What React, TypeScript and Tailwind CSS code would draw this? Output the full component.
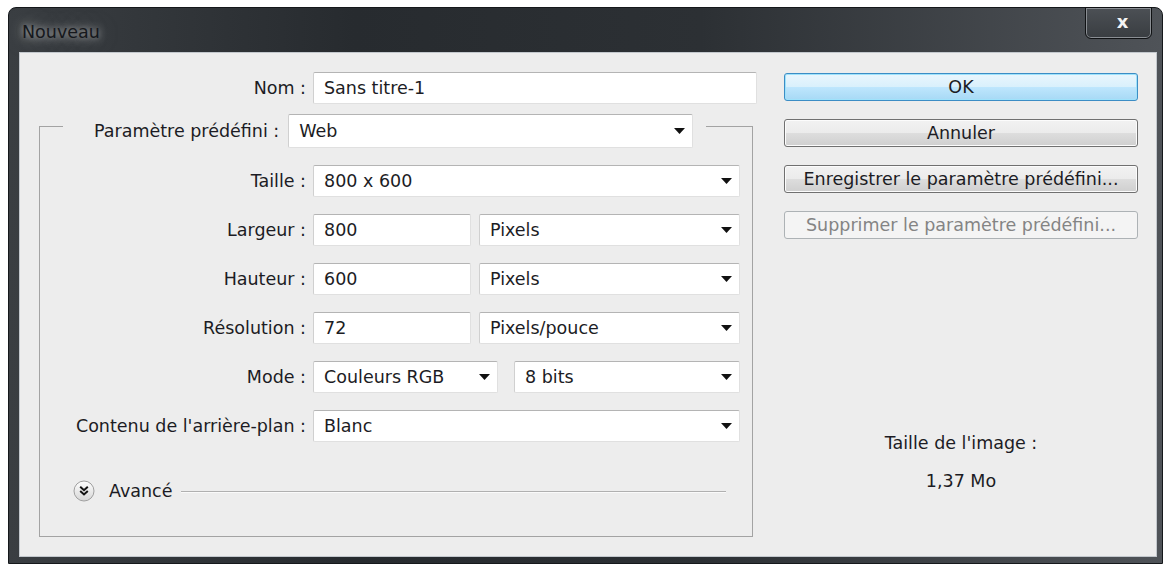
import React from "react";

const Arrow = () => (
  <svg width="11" height="6" viewBox="0 0 11 6" className="shrink-0">
    <path d="M0 0h11L5.5 6z" fill="#111" />
  </svg>
);

const boxCls =
  "h-[32px] bg-white rounded-[2px] border border-[#e0e0e0] border-t-[#b4b4b4] border-l-[#d0d0d0] flex items-center pl-[10px]";

const TextBox = ({ value, className = "" }: { value: string; className?: string }) => (
  <div className={`${boxCls} ${className}`}>{value}</div>
);

const Select = ({ value, className = "" }: { value: string; className?: string }) => (
  <div className={`${boxCls} justify-between pr-[7px] ${className}`}>
    <span>{value}</span>
    <Arrow />
  </div>
);

const Row = ({ label, children }: { label: string; children: React.ReactNode }) => (
  <div className="flex items-center gap-[7px]">
    <div className="w-[266px] text-right whitespace-nowrap">{label}</div>
    {children}
  </div>
);

const Button = ({ label, variant = "normal" }: { label: string; variant?: "default" | "normal" | "disabled" }) => {
  const styles = {
    default:
      "border-[#3c8dc5] bg-[linear-gradient(#eaf6fd,#d9f0fc_50%,#bee6fd_51%,#a7d9f5)] shadow-[inset_0_0_0_1px_#9fe2fb]",
    normal:
      "border-[#707070] bg-[linear-gradient(#f2f2f2,#ebebeb_50%,#dddddd_51%,#cfcfcf)] shadow-[inset_0_0_0_1px_#fcfcfc]",
    disabled: "border-[#adb2b5] bg-[#f4f4f4] text-[#848484]",
  }[variant];
  return (
    <div className={`h-[28px] rounded-[3px] border flex items-center justify-center whitespace-nowrap ${styles}`}>
      {label}
    </div>
  );
};

const AdvancedIcon = () => (
  <svg width="22" height="22" viewBox="0 0 22 22" className="shrink-0">
    <defs>
      <linearGradient id="adv" x1="0" y1="0" x2="0" y2="1">
        <stop offset="0" stopColor="#ffffff" />
        <stop offset="1" stopColor="#d6d6d6" />
      </linearGradient>
    </defs>
    <circle cx="11" cy="11" r="10" fill="url(#adv)" stroke="#a0a0a0" strokeWidth="1" />
    <path d="M7.2 6.8l3.8 3.4 3.8-3.4M7.2 11l3.8 3.4 3.8-3.4" fill="none" stroke="#151515" strokeWidth="2" />
  </svg>
);

export default function App() {
  return (
    <div className="w-[1163px] h-[564px] bg-white pt-[7px] pl-[8px] overflow-hidden font-['DejaVu_Sans',sans-serif] text-[17.5px] leading-[20px] text-[#1c1c24]">
      <div className="w-[1155px] h-[557px] flex flex-col rounded-t-[8px] border border-[#15181b] bg-[linear-gradient(90deg,#3a3e42,#272b2f_30%,#2c3034_60%,#4f5358)]">
        {/* title bar */}
        <div className="h-[44px] shrink-0 flex items-start justify-between">
          <div className="pl-[13px] pt-[14px] text-[#16181c] [text-shadow:0_0_6px_rgba(255,255,255,0.55),0_0_14px_rgba(255,255,255,0.4),0_0_24px_rgba(200,205,210,0.35)]">
            Nouveau
          </div>
          <div className="mr-[10px] -mt-[1px] w-[67px] h-[32px] rounded-b-[6px] border border-[#101214] shadow-[inset_0_0_0_1px_#8a8e93] bg-[linear-gradient(#4c5055,#393d41)] flex items-center justify-center pl-[8px] pb-[3px]">
            <span className="text-[#f4f4f4] font-bold text-[18px] leading-none">x</span>
          </div>
        </div>

        {/* client area */}
        <div className="flex-1 ml-[10px] mr-[5px] mb-[6px] bg-[#ededed] border border-[#c3c8cd] flex">
          {/* form */}
          <div className="ml-[19px] w-[718px] flex flex-col">
            <div className="mt-[19px] flex items-center gap-[7px]">
              <div className="w-[267px] text-right">Nom :</div>
              <TextBox value="Sans titre-1" className="w-[444px] h-[31px]" />
            </div>

            <fieldset className="w-[714px] border border-[#a3a3a3] pb-[34px]">
              <legend className="ml-[23px] pt-[10px] pl-[31px] pr-[13px]">
                <div className="flex items-center gap-[9px]">
                  <span className="whitespace-nowrap">Paramètre prédéfini :</span>
                  <Select value="Web" className="w-[405px] h-[34px]" />
                </div>
              </legend>

              <div className="pt-[17px] flex flex-col gap-[17px]">
                <Row label="Taille :">
                  <Select value="800 x 600" className="w-[427px]" />
                </Row>
                <Row label="Largeur :">
                  <TextBox value="800" className="w-[158px]" />
                  <Select value="Pixels" className="ml-[1px] w-[261px]" />
                </Row>
                <Row label="Hauteur :">
                  <TextBox value="600" className="w-[158px]" />
                  <Select value="Pixels" className="ml-[1px] w-[261px]" />
                </Row>
                <Row label="Résolution :">
                  <TextBox value="72" className="w-[158px]" />
                  <Select value="Pixels/pouce" className="ml-[1px] w-[261px]" />
                </Row>
                <Row label="Mode :">
                  <Select value="Couleurs RGB" className="w-[185px]" />
                  <Select value="8 bits" className="ml-[9px] w-[226px]" />
                </Row>
                <Row label="Contenu de l'arrière-plan :">
                  <Select value="Blanc" className="w-[427px]" />
                </Row>
              </div>

              <div className="mt-[38px] h-[22px] flex items-center">
                <div className="ml-[33px]">
                  <AdvancedIcon />
                </div>
                <span className="ml-[14px]">Avancé</span>
                <div className="flex-1 ml-[8px] mr-[26px] border-t border-[#b0b0b0] shadow-[0_1px_0_#fafafa]" />
              </div>
            </fieldset>
          </div>

          {/* buttons */}
          <div className="ml-[27px] mt-[20px] w-[354px] flex flex-col">
            <div className="flex flex-col gap-[18px]">
              <Button label="OK" variant="default" />
              <Button label="Annuler" />
              <Button label="Enregistrer le paramètre prédéfini..." />
              <Button label="Supprimer le paramètre prédéfini..." variant="disabled" />
            </div>
            <div className="mt-[194px] text-center">Taille de l'image :</div>
            <div className="mt-[18px] text-center">1,37 Mo</div>
          </div>
        </div>
      </div>
    </div>
  );
}
